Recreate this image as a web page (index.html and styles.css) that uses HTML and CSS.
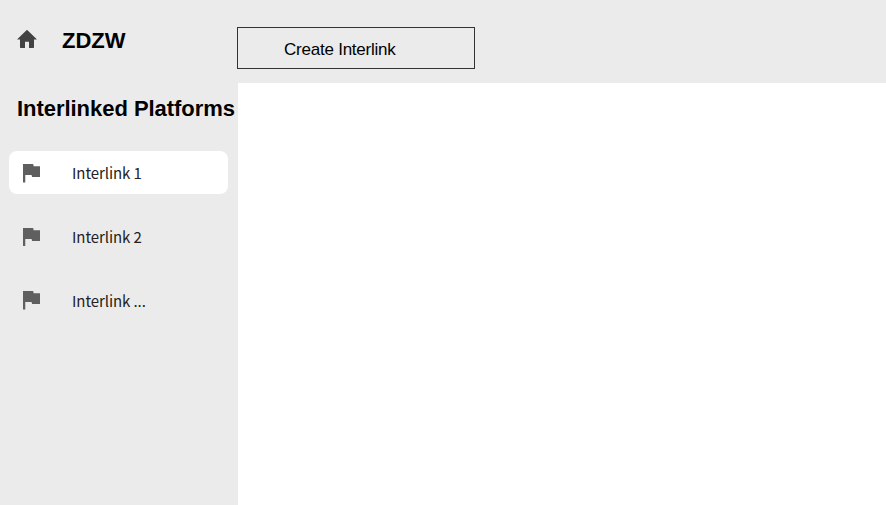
FILE: index.html
```html
<!DOCTYPE html>
<html lang="en">
<head>
<meta charset="utf-8">
<title>ZDZW</title>
<link rel="stylesheet" href="styles.css">
</head>
<body>
<div class="app">
  <header class="topbar">
    <div class="brand">
      <svg class="home-icon" viewBox="2 3 20 17" preserveAspectRatio="none"><path d="M10 20v-6h4v6h4.4q.6 0 .6-.6V12h2.5q.5-.3 0-.6L12.5 3.3q-.5-.4-1 0L2.5 11.4q-.5.3 0 .6H5v7.4q0 .6.6.6z"/></svg>
      <span class="brand-name">ZDZW</span>
    </div>
    <button class="create" type="button"><span class="create-label">Create Interlink</span></button>
  </header>
  <aside class="sidebar">
    <h2 class="heading"><span class="heading-text">Interlinked Platforms</span></h2>
    <nav class="links">
      <a class="link active"><svg class="flag" viewBox="5 4 15 17" preserveAspectRatio="none"><path d="M14.4 6L14 4H5v17h2v-7h5.6l.4 2h7V6z"/></svg><span class="label">Interlink 1</span></a>
      <a class="link"><svg class="flag" viewBox="5 4 15 17" preserveAspectRatio="none"><path d="M14.4 6L14 4H5v17h2v-7h5.6l.4 2h7V6z"/></svg><span class="label">Interlink 2</span></a>
      <a class="link"><svg class="flag" viewBox="5 4 15 17" preserveAspectRatio="none"><path d="M14.4 6L14 4H5v17h2v-7h5.6l.4 2h7V6z"/></svg><span class="label">Interlink ...</span></a>
    </nav>
  </aside>
  <main class="content"></main>
</div>
</body>
</html>
```
FILE: styles.css
```css
* { box-sizing: border-box; }
body { margin: 0; font-family: "Liberation Sans", Arial, sans-serif; color: #000; }
.app {
  display: grid;
  grid-template: 83px 1fr / 238px 1fr;
  height: 100vh;
  overflow: hidden;
  background: #ebebeb;
}
.topbar { grid-column: 1 / -1; display: flex; align-items: flex-start; }
.brand { display: flex; width: 237px; padding: 29.5px 0 0 17px; }
.home-icon { width: 20px; height: 18px; fill: #424242; }
.brand-name { margin-left: 25px; font-size: 22px; line-height: 21px; font-weight: 700; }
.create {
  width: 238px;
  height: 42px;
  margin-top: 27px;
  padding: 3px 0 0 46px;
  border: 1px solid #333;
  background: transparent;
  font: 17px/20px "Liberation Sans", Arial, sans-serif;
  letter-spacing: -0.23px;
  color: #000;
  text-align: left;
}
.heading { margin: 0; padding: 12px 0 0 17px; font-size: 22px; line-height: 28px; letter-spacing: -0.04px; white-space: nowrap; }
.links { display: flex; flex-direction: column; gap: 20px; padding: 27.5px 10px 0 9px; }
.link { display: flex; align-items: center; height: 43.7px; padding-left: 14px; border-radius: 8px; }
.link.active { background: #fff; }
.flag { width: 17px; height: 18.5px; margin-top: 2px; fill: #5f5f5f; }
.label { margin-left: 32px; padding-top: 2px; font-family: "Noto Sans CJK SC", sans-serif; font-size: 15px; line-height: 24px; letter-spacing: -0.08px; color: #222; }
.content { background: #fff; }
```
